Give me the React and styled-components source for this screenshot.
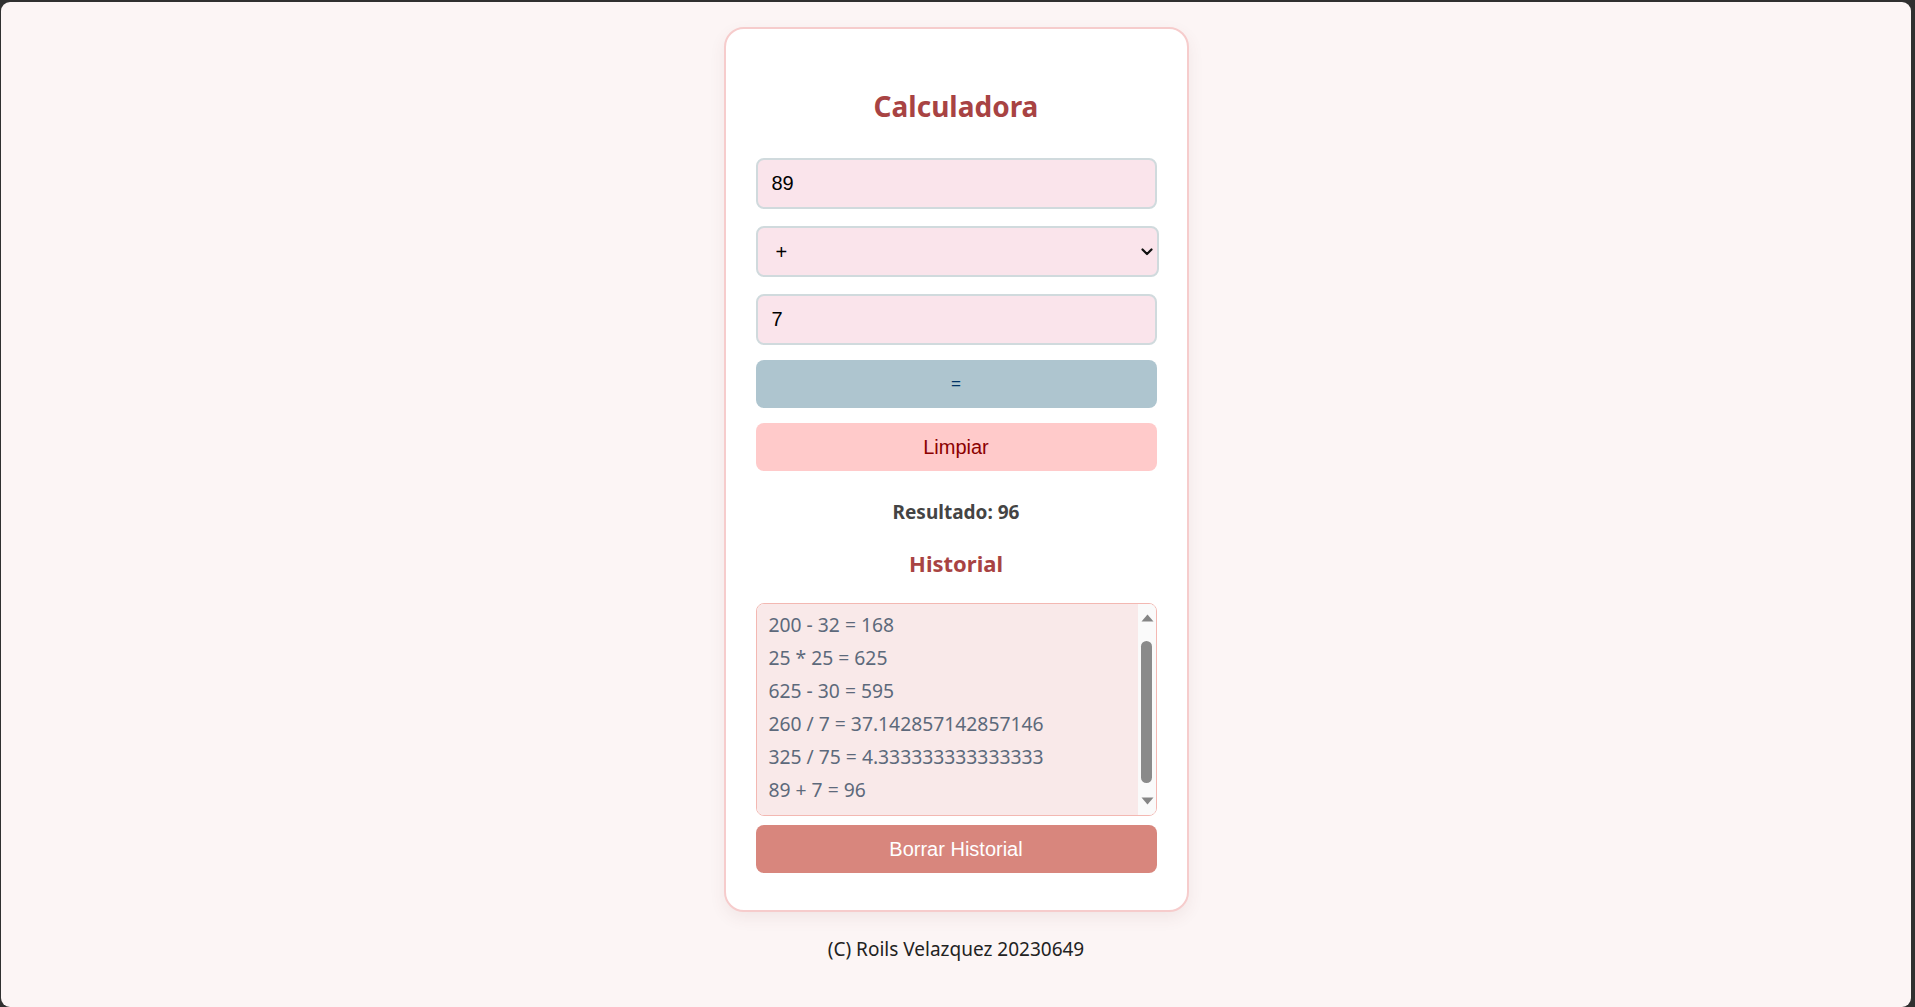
import React, {useEffect, useRef, useState} from 'react';
import styled, {createGlobalStyle} from 'styled-components';

const GlobalStyle = createGlobalStyle`
    html, body {
        margin: 0;
        padding: 0;
        background: #303030;
    }
    * {
        box-sizing: border-box;
    }
`;

const historyEntries = [
    '200 - 32 = 168',
    '25 * 25 = 625',
    '625 - 30 = 595',
    '260 / 7 = 37.142857142857146',
    '325 / 75 = 4.333333333333333',
    '89 + 7 = 96',
];

const ARROW = 17;

const App = () => {
    const [first, setFirst] = useState('89');
    const [op, setOp] = useState('+');
    const [second, setSecond] = useState('7');
    const [thumb, setThumb] = useState({top: ARROW, height: 0});
    const listRef = useRef(null);

    const updateThumb = () => {
        const el = listRef.current;
        if (!el) return;
        const track = el.clientHeight - ARROW * 2;
        const height = track * el.clientHeight / el.scrollHeight;
        const range = el.scrollHeight - el.clientHeight;
        const top = ARROW + (range > 0 ? (track - height) * el.scrollTop / range : 0);
        setThumb({top, height});
    };

    useEffect(() => {
        if (listRef.current) {
            listRef.current.scrollTop = 29;
        }
        updateThumb();
    }, []);

    return (
        <>
        <GlobalStyle />
        <Page>
            <Card>
                <Title>Calculadora</Title>

                <Field value={first} onChange={e => setFirst(e.target.value)} />

                <SelectWrap>
                    <Select value={op} onChange={e => setOp(e.target.value)}>
                        <option value="+">+</option>
                        <option value="-">-</option>
                        <option value="*">*</option>
                        <option value="/">/</option>
                    </Select>
                    <Chevron width="12" height="8" viewBox="0 0 12 8">
                        <path d="M1.5 1.5 L6 6 L10.5 1.5" fill="none" stroke="#111" strokeWidth="2.2" strokeLinecap="round" strokeLinejoin="round" />
                    </Chevron>
                </SelectWrap>

                <Field $gap="15px" value={second} onChange={e => setSecond(e.target.value)} />

                <Button $bg="#aec5cf" $color="#003366" $size="17px">=</Button>
                <Button $bg="#ffcaca" $color="#8b0000" $top="15px">Limpiar</Button>

                <Result>Resultado: 96</Result>
                <SubTitle>Historial</SubTitle>

                <ListWrap>
                    <HistoryList ref={listRef} onScroll={updateThumb}>
                        {historyEntries.map(entry => (
                            <HistoryItem key={entry}>{entry}</HistoryItem>
                        ))}
                    </HistoryList>
                    <ScrollBar>
                        <ArrowIcon $pos="top" width="13" height="8" viewBox="0 0 13 8">
                            <path d="M6.5 0.5 L12.5 7.5 L0.5 7.5 Z" fill="#858585" />
                        </ArrowIcon>
                        <Thumb style={{top: thumb.top, height: thumb.height}} />
                        <ArrowIcon $pos="bottom" width="13" height="8" viewBox="0 0 13 8">
                            <path d="M0.5 0.5 L12.5 0.5 L6.5 7.5 Z" fill="#858585" />
                        </ArrowIcon>
                    </ScrollBar>
                </ListWrap>

                <Button $bg="#d8867d" $color="#fff" $top="9px">Borrar Historial</Button>
            </Card>

            <Footer>(C) Roils Velazquez 20230649</Footer>
        </Page>
        </>
    );
};

const Page = styled.div`
    margin: 2px 4px 0 1px;
    min-height: calc(100vh - 2px);
    border-radius: 9px;
    background: #fcf5f5;
    padding-top: 25px;
    display: flex;
    flex-direction: column;
    align-items: center;
    font-family: "Noto Sans", "Open Sans", sans-serif;
`;

const Card = styled.div`
    width: 465px;
    background: #fff;
    border: 2px solid #f6cccc;
    border-radius: 20px;
    padding: 28px 30px 37px;
    display: flex;
    flex-direction: column;
    box-shadow: 0 6px 16px rgba(120, 60, 60, 0.08);
`;

const Title = styled.h1`
    margin: 31px 0 34px;
    font-size: 28px;
    line-height: 36px;
    font-weight: 700;
    color: #a84343;
    text-align: center;
`;

const Field = styled.input`
    width: 100%;
    height: 51px;
    margin: 0 0 ${p => p.$gap || '17px'};
    padding: 0 14px;
    border: 2px solid #d0dadd;
    border-radius: 8px;
    background: #fae4eb;
    font-family: "Liberation Sans", Arial, sans-serif;
    font-size: 20px;
    color: #000;
    outline: none;
`;

const SelectWrap = styled.div`
    position: relative;
    width: calc(100% + 2px);
    margin-bottom: 17px;
`;

const Select = styled.select`
    appearance: none;
    width: 100%;
    height: 51px;
    padding: 0 18px;
    border: 2px solid #d0dadd;
    border-radius: 8px;
    background: #fae4eb;
    font-family: "Liberation Sans", Arial, sans-serif;
    font-size: 20px;
    color: #000;
    outline: none;
`;

const Chevron = styled.svg`
    position: absolute;
    right: 6px;
    top: 22px;
    pointer-events: none;
`;

const Button = styled.button`
    width: 100%;
    height: 48px;
    margin-top: ${p => p.$top || '0'};
    border: none;
    border-radius: 8px;
    background: ${p => p.$bg};
    color: ${p => p.$color};
    font-family: "Liberation Sans", Arial, sans-serif;
    font-size: ${p => p.$size || '20px'};
    cursor: pointer;
`;

const Result = styled.div`
    margin-top: 29px;
    font-size: 19px;
    line-height: 24px;
    font-weight: 700;
    color: #444;
    text-align: center;
`;

const SubTitle = styled.h3`
    margin: 24px 0 0;
    font-size: 22px;
    line-height: 30px;
    font-weight: 700;
    color: #a84343;
    text-align: center;
`;

const ListWrap = styled.div`
    position: relative;
    margin-top: 25px;
    height: 213px;
`;

const HistoryList = styled.ul`
    list-style: none;
    margin: 0;
    height: 100%;
    padding: 33px 26px 32px 12px;
    overflow-y: scroll;
    scrollbar-width: none;
    background: #f9e9e9;
    border: 1px solid #f3b8b2;
    border-radius: 8px;

    &::-webkit-scrollbar {
        display: none;
    }
`;

const HistoryItem = styled.li`
    height: 33px;
    line-height: 33px;
    font-size: 19.3px;
    color: #5d697b;
    white-space: nowrap;
`;

const ScrollBar = styled.div`
    position: absolute;
    top: 1px;
    right: 1px;
    bottom: 1px;
    width: 18px;
    background: #fafafa;
    border-radius: 0 7px 7px 0;
    pointer-events: none;
`;

const ArrowIcon = styled.svg`
    position: absolute;
    left: 3px;
    ${p => p.$pos === 'top' ? 'top: 10px;' : 'bottom: 10px;'}
`;

const Thumb = styled.div`
    position: absolute;
    left: 3px;
    width: 11px;
    border-radius: 6px;
    background: #8a8a8a;
`;

const Footer = styled.div`
    margin-top: 25px;
    font-size: 19px;
    line-height: 24px;
    color: #222;
`;

export default App;
